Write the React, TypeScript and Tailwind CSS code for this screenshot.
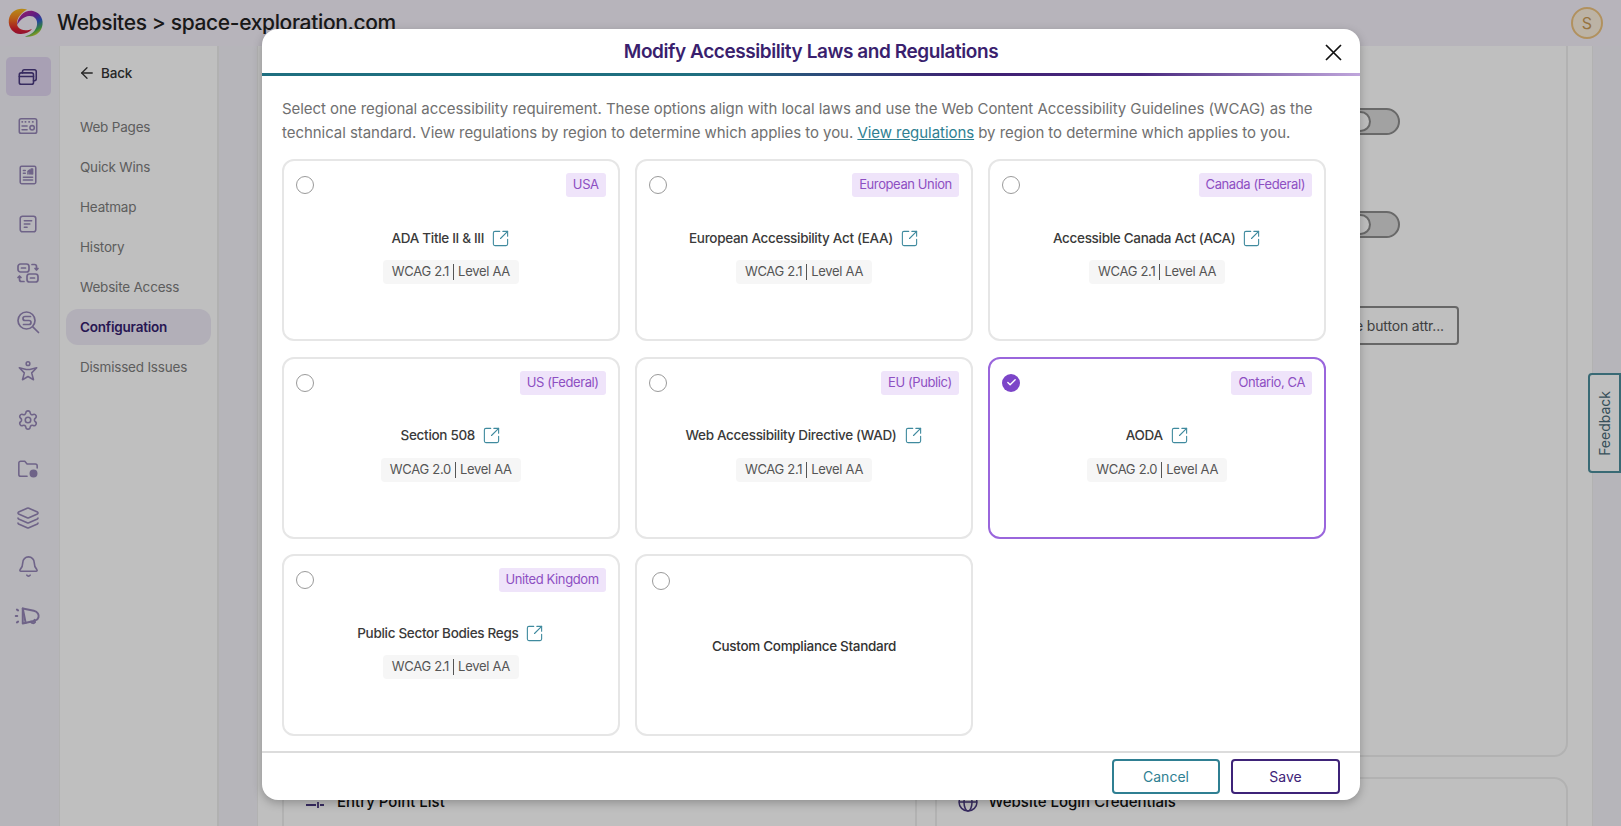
import { ArrowLeft, Bell, Check, Layers, Settings, SquareArrowOutUpRight } from 'lucide-react';
import type { ReactNode } from 'react';

interface LawOption {
  title: string;
  region: string;
  wcag: string;
  selected?: boolean;
}

const options: LawOption[] = [
  { title: 'ADA Title II & III', region: 'USA', wcag: '2.1' },
  { title: 'European Accessibility Act (EAA)', region: 'European Union', wcag: '2.1' },
  { title: 'Accessible Canada Act (ACA)', region: 'Canada (Federal)', wcag: '2.1' },
  { title: 'Section 508', region: 'US (Federal)', wcag: '2.0' },
  { title: 'Web Accessibility Directive (WAD)', region: 'EU (Public)', wcag: '2.1' },
  { title: 'AODA', region: 'Ontario, CA', wcag: '2.0', selected: true },
  { title: 'Public Sector Bodies Regs', region: 'United Kingdom', wcag: '2.1' },
];

const navItems = ['Web Pages', 'Quick Wins', 'Heatmap', 'History', 'Website Access', 'Configuration', 'Dismissed Issues'];

function Svg({ children, className = 'h-[22px] w-[22px]' }: { children: ReactNode; className?: string }) {
  return (
    <svg viewBox="0 0 24 24" fill="none" stroke="currentColor" strokeWidth="1.7" strokeLinecap="round" strokeLinejoin="round" className={className}>
      {children}
    </svg>
  );
}

const railIcons: ReactNode[] = [
  <Svg key="cards">
    <path d="M6 7.5V6a2 2 0 0 1 2-2h11a2 2 0 0 1 2 2v8a2 2 0 0 1-2 2h-1" />
    <rect x="2.5" y="7.5" width="15.5" height="12.5" rx="2" />
    <path d="M2.5 11.5H18" />
  </Svg>,
  <Svg key="page">
    <rect x="2.5" y="4" width="19" height="16" rx="2" />
    <path d="M5.5 7.5h.5M9 7.5h.5M13 7.5h.5M17 7.5h.5M5.5 12H11M5.5 16H11" />
    <circle cx="16.5" cy="14" r="2.4" />
  </Svg>,
  <Svg key="report">
    <rect x="3.5" y="2.5" width="17" height="19" rx="1.5" />
    <path d="M7 7h2M7 10h2M12 11V8l2-1.5V11M15.5 11V5.500h1.500V11M7 14.500h10M7 17.500h10" />
  </Svg>,
  <Svg key="doc">
    <rect x="3.500" y="3.500" width="17" height="17" rx="2.500" />
    <path d="M8 8.500h8M8 12h6M8 15.500h3" />
  </Svg>,
  <Svg key="swap" className="h-[24px] w-[24px]">
    <rect x="2" y="3" width="11" height="8" rx="2.500" />
    <rect x="11" y="13" width="11" height="8" rx="2.500" />
    <path d="M5.500 7h4M14.500 17h4M16 3.500h2.500a2 2 0 0 1 2 2V9M19 7.500l1.500 1.500L22 7.500M8 20.500H5.500a2 2 0 0 1-2-2V15M2 16.500 3.500 15 5 16.500" />
  </Svg>,
  <Svg key="search" className="h-[24px] w-[24px]">
    <circle cx="10.500" cy="10.500" r="8.500" />
    <path d="m16.800 16.800 5.700 5.700M14.500 6.500H9a2 2 0 0 0 0 4h4a2 2 0 0 1 0 4H7.500" />
  </Svg>,
  <Svg key="access">
    <circle cx="12" cy="4" r="2" />
    <path d="M2.500 8.500 9 10l1 .3h4l1-.3 6.500-1.500-5.500 5.500 2 7.500-6-3.500L6 21.500 8 14z" />
  </Svg>,
  <Settings key="settings" className="h-[22px] w-[22px]" strokeWidth={1.7} />,
  <Svg key="folder">
    <path d="M11 20H4a2 2 0 0 1-2-2V5.500a2 2 0 0 1 2-2h4.500l2.500 3h9a2 2 0 0 1 2 2V11" />
    <circle cx="18" cy="17" r="3.500" fill="currentColor" />
  </Svg>,
  <Layers key="layers" className="h-[24px] w-[24px]" strokeWidth={1.6} />,
  <Bell key="bell" className="h-[23px] w-[23px]" strokeWidth={1.7} />,
  <Svg key="promo" className="h-[28px] w-[28px]">
    <path d="M7.500 5.500 17 7.500c3.500.8 4.500 3.500 4 5.500-.4 1.500-1.500 2.500-3 3l-10.500 2.500z" />
    <path d="M7.500 5.500 10 18M14.500 16.800a2 2 0 0 0 3.500.500l-.5-2M2.500 6.500l1 .7M1.500 12h1.300M2.500 17.500l1-.7" />
  </Svg>,
];

function Logo() {
  return (
    <svg viewBox="0 0 36 32" className="h-[32px] w-[36px]">
      <defs>
        <linearGradient id="logoLeft" x1="0.5" y1="0" x2="0.5" y2="1">
          <stop offset="0" stopColor="#f5bb1f" />
          <stop offset="0.4" stopColor="#f57a20" />
          <stop offset="0.8" stopColor="#dc2030" />
          <stop offset="1" stopColor="#c01840" />
        </linearGradient>
        <linearGradient id="logoRight" x1="0.1" y1="0.1" x2="0.6" y2="1">
          <stop offset="0" stopColor="#c02090" />
          <stop offset="0.35" stopColor="#7a2ab0" />
          <stop offset="0.6" stopColor="#2f5fd0" />
          <stop offset="0.85" stopColor="#48b050" />
          <stop offset="1" stopColor="#c0cc30" />
        </linearGradient>
      </defs>
      <path d="M19 2.500C10 0 2 4 .8 13 0 21 6 27.500 13 27c5-.5 9-2 11-5-5 2-12 2-14.500-3C7.500 14 11 7 19 2.500Z" fill="url(#logoLeft)" />
      <path d="M9 18C10 9 17 2.500 25 4c8 2 11 9 9 16-2 7-9 10.500-17 9.500 6-1.500 11-5.500 12-11.500 1-6-3-9.500-8-9-5 .5-9 4-12 9Z" fill="url(#logoRight)" />
    </svg>
  );
}

function RegionRadio({ selected }: { selected?: boolean }) {
  if (selected) {
    return (
      <span className="flex h-[18px] w-[18px] items-center justify-center rounded-full bg-[#7c45c8]">
        <Check className="h-[11px] w-[11px] text-white" strokeWidth={3} />
      </span>
    );
  }
  return <span className="block h-[18px] w-[18px] rounded-full border-[1.5px] border-[#9a9a9a] bg-white" />;
}

function OptionCard({ option }: { option: LawOption }) {
  return (
    <div
      className={`h-[182px] rounded-[12px] border-2 px-[12px] pt-[12px] ${
        option.selected ? 'border-[#9a66dc]' : 'border-[#e6e6e6]'
      }`}
    >
      <div className="flex items-start justify-between">
        <div className="pt-[3px]">
          <RegionRadio selected={option.selected} />
        </div>
        <span className="flex h-[24px] items-center rounded-[3px] bg-[#efe4fa] px-[7px] text-[13px] tracking-[-0.4px] text-[#8d4fc2]">
          {option.region}
        </span>
      </div>
      <div className="mt-[31px] flex h-[20px] items-center justify-center gap-[7px] text-[13.500px] font-medium tracking-[-0.31px] text-[#3a3a3a]">
        {option.title}
        <SquareArrowOutUpRight className="h-[19px] w-[19px] text-[#3f8a9e]" strokeWidth={1.4} />
      </div>
      <div className="mt-[12px] flex justify-center">
        <span className="flex h-[24px] items-center rounded-[4px] bg-[#f6f6f6] px-[9px] text-[13px] tracking-[-0.3px] text-[#555555]">
          WCAG {option.wcag}
          <span className="mx-[4px] h-[16px] w-px bg-[#555555]" />
          Level AA
        </span>
      </div>
    </div>
  );
}

export default function App() {
  return (
    <div className="relative flex h-screen w-full flex-col overflow-hidden bg-white font-['Inter',sans-serif]">
      {/* Top bar */}
      <header className="flex h-[46px] shrink-0 items-center justify-between bg-[#f4f0fa] pl-[8px] pr-[18px]">
        <div className="flex items-center gap-[13px]">
          <Logo />
          <h1 className="text-[21px] font-medium tracking-[-0.36px] text-[#222222]">Websites &gt; space-exploration.com</h1>
        </div>
        <div className="flex h-[32px] w-[32px] items-center justify-center rounded-full border-2 border-[#edc27e] bg-[#fbefdd] text-[16px] text-[#c99a55]">
          S
        </div>
      </header>

      <div className="flex min-h-0 flex-1">
        {/* Icon rail */}
        <nav className="flex w-[60px] shrink-0 flex-col items-center border-r border-[#eeeeee] bg-[#f3f2f8] pr-[3px] pt-[11px]">
          {railIcons.map((icon, i) => (
            <div
              key={i}
              className={`flex h-[39px] items-center justify-center ${
                i === 0 ? 'w-[45px] rounded-[5px] bg-[#e1d6f0] text-[#4a3a80]' : 'w-[45px] text-[#9485b6]'
              } ${i < 11 ? 'mb-[10px]' : ''}`}
            >
              {icon}
            </div>
          ))}
        </nav>

        {/* Section nav */}
        <aside className="w-[159px] shrink-0 border-r-2 border-[#ececec] bg-white px-[6px] pt-[17px]">
          <div className="flex h-[20px] items-center gap-[5px] pl-[12px] text-[13.500px] font-medium tracking-[-0.2px] text-[#333333]">
            <ArrowLeft className="h-[18px] w-[18px]" strokeWidth={1.7} />
            Back
          </div>
          <ul className="mt-[26px]">
            {navItems.map((item) => (
              <li
                key={item}
                className={`mb-[4px] flex h-[36px] items-center rounded-[12px] pl-[14px] text-[13.500px] tracking-[-0.2px] ${
                  item === 'Configuration'
                    ? 'bg-[#eeeaf6] font-semibold text-[#34206e]'
                    : 'text-[#7d7d7d]'
                }`}
              >
                {item}
              </li>
            ))}
          </ul>
        </aside>

        <div className="w-[38px] shrink-0 bg-[#f3f2f8]" />

        {/* Page behind the dialog */}
        <main className="flex w-[1336px] shrink-0 flex-col border-x border-[#eeeeee] bg-white pl-[24px] pr-[24px]">
          <section className="flex h-[711px] shrink-0 flex-col rounded-b-[14px] border-x-2 border-b-2 border-[#eeeeee] pt-[62px]">
            <div className="flex justify-end pr-[166px]">
              <div className="flex h-[27px] w-[54px] items-center rounded-full border-2 border-[#8c8c8c] bg-[#d8d8d8] px-[2px]">
                <span className="h-[21px] w-[21px] rounded-full border-2 border-[#8c8c8c] bg-white" />
              </div>
            </div>
            <div className="mt-[76px] flex justify-end pr-[166px]">
              <div className="flex h-[27px] w-[54px] items-center rounded-full border-2 border-[#8c8c8c] bg-[#d8d8d8] px-[2px]">
                <span className="h-[21px] w-[21px] rounded-full border-2 border-[#8c8c8c] bg-white" />
              </div>
            </div>
            <div className="mt-[68px] flex justify-end pr-[107px]">
              <div className="flex h-[39px] items-center rounded-[4px] border-2 border-[#8a8a8a] px-[13px] text-[14px] tracking-[-0.15px] text-[#555555]">
                Ignore button attr...
              </div>
            </div>
          </section>
          <div className="mt-[20px] flex gap-[18px]">
            <section className="flex h-[60px] flex-1 items-start gap-[13px] rounded-t-[14px] border-2 border-[#eeeeee] pl-[22px] pt-[12px] text-[15px] font-medium text-[#111111]">
              <svg viewBox="0 0 18 14" className="mt-[4px] h-[14px] w-[18px]" fill="none" stroke="#4a3a80" strokeWidth="1.800">
                <path d="M0 3h18M0 10h10M14 10h4M12 7v6" />
              </svg>
              Entry Point List
            </section>
            <section className="flex h-[60px] flex-1 items-start gap-[11px] rounded-t-[14px] border-2 border-[#eeeeee] pl-[21px] pt-[12px] text-[15px] font-medium text-[#111111]">
              <svg viewBox="0 0 20 20" className="mt-[1px] h-[20px] w-[20px]" fill="none" stroke="#4a3a80" strokeWidth="1.500">
                <circle cx="10" cy="10" r="9" />
                <ellipse cx="10" cy="10" rx="4" ry="9" />
                <path d="M1 10h18" />
              </svg>
              Website Login Credentials
            </section>
          </div>
        </main>
        <div className="flex-1 bg-[#f3f2f8]" />
      </div>

      {/* Feedback tab */}
      <div className="absolute right-0 top-[373px] flex h-[100px] w-[33px] items-center justify-center rounded-l-[4px] border-2 border-[#4d8e9c] bg-white">
        <span className="rotate-180 text-[14px] text-[#4a6a78] [writing-mode:vertical-rl]">Feedback</span>
      </div>

      {/* Backdrop */}
      <div className="absolute inset-0 bg-black/25" />

      {/* Dialog */}
      <div className="absolute left-[262px] top-[29px] flex h-[771px] w-[1098px] flex-col overflow-hidden rounded-[16px] bg-white shadow-[0_3px_10px_rgba(0,0,0,0.25)]">
        <div className="relative flex h-[44px] shrink-0 items-center justify-center pt-[2px]">
          <h2 className="text-[19px] font-semibold tracking-[-0.43px] text-[#3a1f6e]">Modify Accessibility Laws and Regulations</h2>
          <button className="absolute right-[18px] top-[15px]">
            <svg viewBox="0 0 17 17" className="h-[17px] w-[17px]" fill="none" stroke="#111111" strokeWidth="1.700">
              <path d="M1 1l15 15M16 1 1 16" />
            </svg>
          </button>
        </div>
        <div className="h-[3px] shrink-0 bg-[linear-gradient(90deg,#1f6f80_0%,#1f6f80_40%,#3e1f72_65%,#4a2a80_80%,#c0a6dc_100%)]" />

        <p className="mt-[21px] whitespace-nowrap px-[20px] text-[15px] leading-[24px] tracking-[-0.05px] text-[#707070]">
          Select one regional accessibility requirement. These options align with local laws and use the Web Content Accessibility Guidelines (WCAG) as the
          <br />
          technical standard. View regulations by region to determine which applies to you.{' '}
          <a className="text-[#2f7f92] underline">View regulations</a> by region to determine which applies to you.
        </p>

        <div className="mt-[14px] grid grid-cols-3 gap-x-[15.500px] gap-y-[15.500px] pl-[20px] pr-[34px]">
          {options.map((option) => (
            <OptionCard key={option.title} option={option} />
          ))}
          <div className="relative flex h-[182px] items-center justify-center rounded-[12px] border-2 border-[#e6e6e6] pt-[2px] text-[13.500px] font-medium tracking-[-0.31px] text-[#333333]">
            <span className="absolute left-[15px] top-[16px]">
              <RegionRadio />
            </span>
            Custom Compliance Standard
          </div>
        </div>

        <div className="mt-[15px] flex flex-1 items-start justify-end gap-[11px] border-t-2 border-[#dcdcdc] pr-[20px] pt-[6px]">
          <button className="h-[35px] w-[108px] rounded-[4px] border-2 border-[#2f7f92] text-[14px] text-[#2f7f92]">Cancel</button>
          <button className="h-[35px] w-[109px] rounded-[4px] border-2 border-[#3e2378] text-[14px] text-[#3e2378]">Save</button>
        </div>
      </div>
    </div>
  );
}
